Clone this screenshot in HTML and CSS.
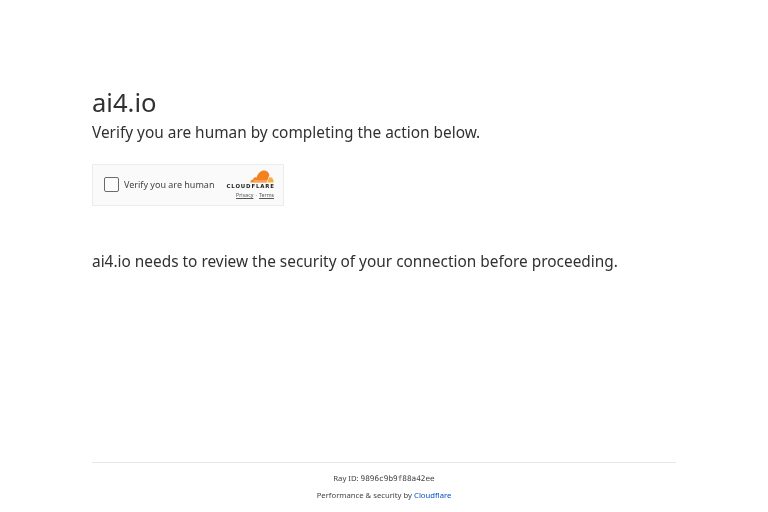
FILE: index.html
```html
<!DOCTYPE html>
<html lang="en">
<head>
<meta charset="utf-8">
<title>ai4.io</title>
<link rel="stylesheet" href="styles.css">
</head>
<body>
<div class="page">
  <main class="main">
    <h1 class="title">ai4.io</h1>
    <h2 class="subtitle">Verify you are human by completing the action below.</h2>
    <div class="widget">
      <div class="check">
        <span class="box"></span>
        <span class="check-label">Verify you are human</span>
      </div>
      <div class="brand">
        <svg class="cloud" width="24" height="13" viewBox="0 0 24 13">
          <path fill="#f48120" d="M0.5 12.5 C0.3 10.6 1.6 9.4 3.2 9.4 C3.4 7.6 5.2 6.8 6.6 7.6 C7.6 3 11 0.4 14 0.4 C16.8 0.4 18.8 2.4 19.4 5 L16.6 12.5 Z"/>
          <path fill="#faad3f" d="M17.4 12.5 C18 10.2 18.4 8 19.6 7.2 C21.8 6.8 23.8 8.6 23.6 12.5 Z"/>
          <path fill="#fff" d="M3.6 10.7 L17.8 10.7 L17.6 11.2 L3.6 11.2 Z"/>
        </svg>
        <div class="brand-name">CLOUDFLARE</div>
        <div class="brand-links"><a href="#">Privacy</a> <span>·</span> <a href="#">Terms</a></div>
      </div>
    </div>
    <p class="review">ai4.io needs to review the security of your connection before proceeding.</p>
  </main>
  <footer class="footer">
    <div class="ray">Ray ID: <code>9896c9b9f88a42ee</code></div>
    <div class="perf">Performance &amp; security by <a href="#">Cloudflare</a></div>
  </footer>
</div>
</body>
</html>
```

FILE: styles.css
```css
html, body {
  margin: 0;
  height: 100%;
}
body {
  font-family: "Noto Sans", "Open Sans", sans-serif;
  color: #313131;
  background: #fff;
}
.page {
  height: 512px;
  display: flex;
  flex-direction: column;
  padding: 0 92px;
  box-sizing: border-box;
  filter: blur(0.3px);
}
.main {
  flex: 1;
  padding-top: 85px;
}
.title {
  margin: 0;
  font-size: 25.6px;
  line-height: 35px;
  font-weight: 400;
}
.subtitle {
  margin: 2px 0 0;
  font-size: 15.4px;
  line-height: 21px;
  font-weight: 400;
}
.widget {
  margin-top: 21px;
  width: 192px;
  height: 42px;
  box-sizing: border-box;
  display: flex;
  justify-content: space-between;
  align-items: center;
  padding: 0 9px 1px 10.5px;
  background: #fafafa;
  border: 1px solid #ececec;
}
.check {
  display: flex;
  align-items: center;
  gap: 5px;
}
.box {
  width: 15.5px;
  height: 15.5px;
  box-sizing: border-box;
  border: 1.5px solid #6b6b6b;
  border-radius: 2px;
  background: #fcfcfc;
}
.check-label {
  font-size: 9px;
  color: #444;
}
.brand {
  display: flex;
  flex-direction: column;
  align-items: flex-end;
}
.cloud {
  display: block;
}
.brand-name {
  font-family: "DejaVu Sans", sans-serif;
  font-weight: 700;
  font-size: 5.4px;
  line-height: 7px;
  letter-spacing: 0.85px;
  margin-right: -0.8px;
  color: #222;
}
.brand-links {
  margin-top: 2px;
  font-size: 5.2px;
  line-height: 7px;
  word-spacing: 0.8px;
  color: #555;
}
.brand-links a {
  color: #555;
}
.review {
  margin: 45px 0 0;
  font-size: 15.4px;
  line-height: 21px;
}
.footer {
  height: 50px;
  box-sizing: border-box;
  border-top: 1px solid #e8e8e8;
  text-align: center;
  font-size: 7.7px;
  color: #444;
  padding-top: 9px;
}
.ray {
  line-height: 12px;
}
.ray code {
  font-family: "DejaVu Sans Mono", monospace;
  font-size: 7.7px;
}
.perf {
  margin-top: 4px;
  line-height: 12px;
}
.perf a {
  color: #0051c3;
  text-decoration: none;
}
```
